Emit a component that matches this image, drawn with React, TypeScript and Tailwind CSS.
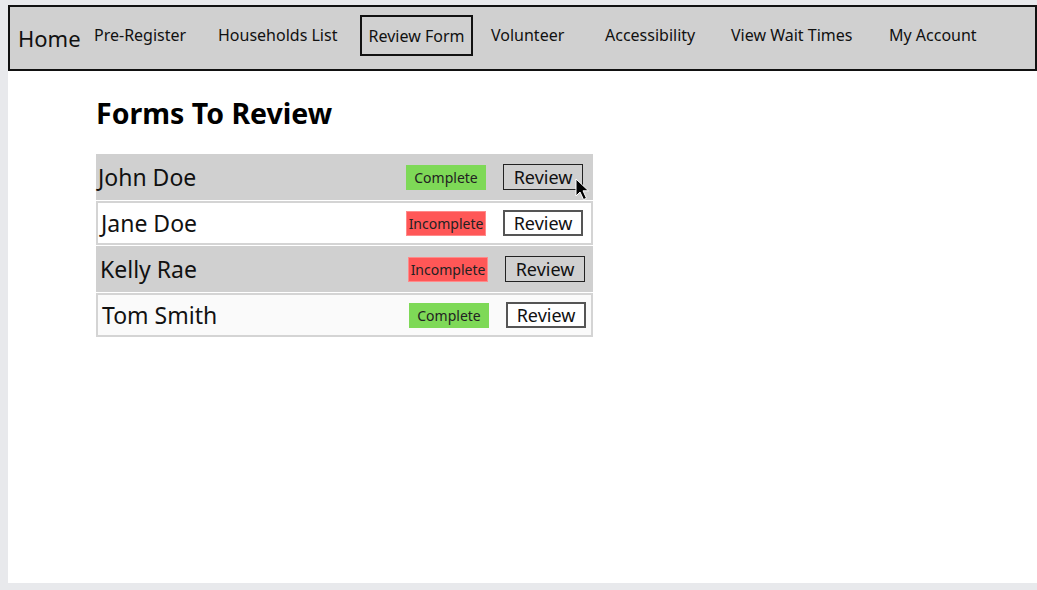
import React from "react";

const font = { fontFamily: '"Noto Sans", "Open Sans", sans-serif' };

const navItems = [
  { label: "Pre-Register", w: "w-[124px]" },
  { label: "Households List", w: "w-[142px]" },
];

const navRight = [
  { label: "Volunteer", w: "w-[114px]" },
  { label: "Accessibility", w: "w-[126px]" },
  { label: "View Wait Times", w: "w-[158px]" },
  { label: "My Account", w: "w-[120px]" },
];

type Row = { name: string; done: boolean; shaded: boolean; shift: string };

const rows: Row[] = [
  { name: "John Doe", done: true, shaded: true, shift: "pl-[2px] pr-[10px]" },
  { name: "Jane Doe", done: false, shaded: false, shift: "pl-[3px] pr-[8px]" },
  { name: "Kelly Rae", done: false, shaded: true, shift: "pl-[4px] pr-[8px]" },
  { name: "Tom Smith", done: true, shaded: false, shift: "pl-[4px] pr-[5px]" },
];

function Cursor() {
  return (
    <svg
      className="absolute left-[72px] top-[14px]"
      width="16"
      height="24"
      viewBox="0 0 16 24"
    >
      <path
        d="M1 1 L1 18 L5 14 L8.5 21.5 L11.5 20.3 L8 12.8 L13.5 12.8 Z"
        fill="#000"
        stroke="#fff"
        strokeWidth="1"
      />
    </svg>
  );
}

function FormRow({ row, index }: { row: Row; index: number }) {
  const bg = row.shaded
    ? "bg-[#d0d0d0] h-[46px]"
    : index === 3
    ? "bg-[#fafafa] border-2 border-[#d4d4d4] h-[44px]"
    : "bg-white border-2 border-[#d4d4d4] h-[44px]";
  return (
    <div className={`flex items-center ${bg} ${row.shift}`}>
      <span className="flex-1 text-[23px] text-[#111] pt-[1px]">{row.name}</span>
      <span
        className={`w-[80px] h-[25px] flex items-center justify-center text-[14px] text-[#222] ${
          row.done ? "bg-[#7ed957]" : "bg-[#ff5757] border border-[#ff8a8a]"
        }`}
      >
        {row.done ? "Complete" : "Incomplete"}
      </span>
      <div className="relative ml-[17px]">
        <button
          className={`w-[80px] h-[26px] flex items-center justify-center text-[18px] text-[#111] ${
            row.shaded ? "border-[1.5px] border-[#222]" : "bg-white border-2 border-[#555]"
          }`}
        >
          Review
        </button>
        {index === 0 && <Cursor />}
      </div>
    </div>
  );
}

export default function App() {
  return (
    <div className="w-[1037px] h-[590px] bg-[#e8e9ec] pl-[8px] pt-[5px] overflow-hidden" style={font}>
      <div className="bg-white h-[578px]">
        <nav className="h-[66px] bg-[#d0d0d0] border-2 border-[#111] flex items-center pl-[8px] text-[#111]">
          <span className="w-[76px] text-[22px] pt-[1px]">Home</span>
          {navItems.map((n) => (
            <span key={n.label} className={`${n.w} text-[16px] pb-[7px]`}>
              {n.label}
            </span>
          ))}
          <div className="w-[131px] pb-[5px]">
            <span className="w-[113px] h-[41px] border-2 border-[#111] flex items-center justify-center text-[16px]">
              Review Form
            </span>
          </div>
          {navRight.map((n) => (
            <span key={n.label} className={`${n.w} text-[16px] pb-[7px]`}>
              {n.label}
            </span>
          ))}
        </nav>
        <div className="pl-[88px]">
          <h1 className="text-[28.5px] font-bold text-black mt-[24px] leading-[36px]">
            Forms To Review
          </h1>
          <div className="w-[497px] mt-[23px] flex flex-col gap-[1px]">
            {rows.map((r, i) => (
              <FormRow key={r.name} row={r} index={i} />
            ))}
          </div>
        </div>
      </div>
    </div>
  );
}
